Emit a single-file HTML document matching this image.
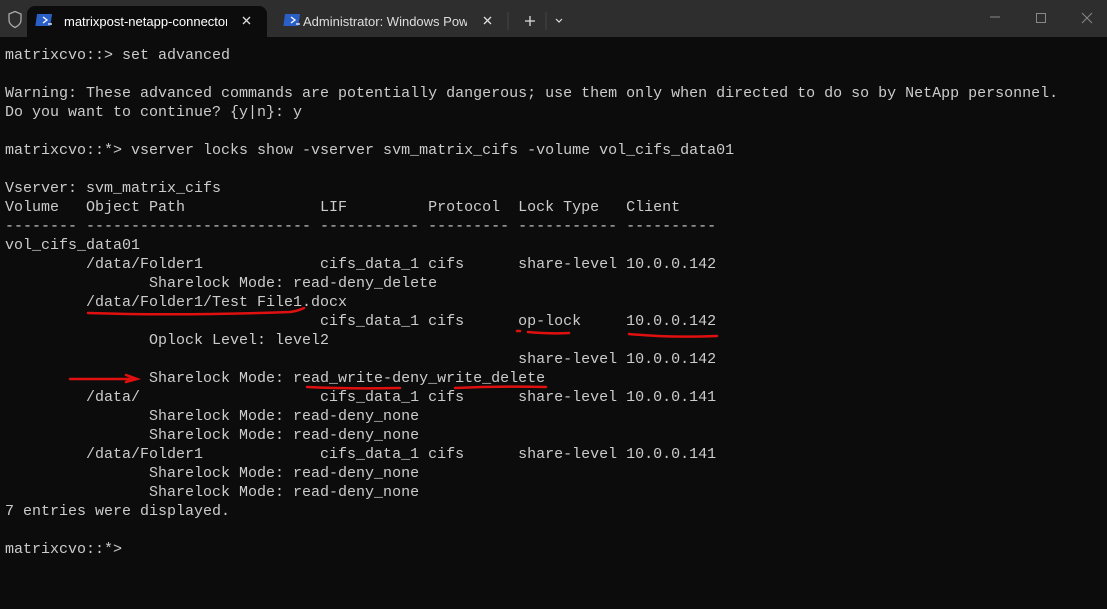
<!DOCTYPE html>
<html><head><meta charset="utf-8"><style>
body{margin:0;width:1107px;height:609px;background:#0c0c0c;overflow:hidden;position:relative;font-family:"Liberation Sans",sans-serif}
.bar{position:absolute;left:0;top:0;width:1107px;height:37px;background:#2e2e2e}
.tab{position:absolute;top:6px;height:31px;font-size:13px;color:#fff;line-height:31px;white-space:nowrap;overflow:hidden}
.t1{left:27px;width:240px;background:#0c0c0c;border-radius:8px 8px 0 0}
pre{position:absolute;left:5px;top:46px;margin:0;font-family:"Liberation Mono",monospace;font-size:15px;line-height:19px;color:#cccccc}
svg{position:absolute;left:0;top:0}
</style></head><body>
<div class="bar"></div>
<div class="tab t1"></div>
<div class="tab" style="left:64px;width:163px">matrixpost-netapp-connector</div>
<div class="tab" style="left:303px;width:164px;color:#ddd">Administrator: Windows PowerShell</div>
<svg width="1107" height="609">
<path d="M9 14 L15 11.5 L21 14 V20 C21 24 18 26 15 27.5 C12 26 9 24 9 20 Z" fill="none" stroke="#aaa" stroke-width="1.3"/>
<rect x="39" y="14" width="15" height="12" fill="#2a5fc8" transform="skewX(-8)"/>
<path d="M43 17 l4 3 -4 3 M48 24 h4" stroke="#fff" stroke-width="1.3" fill="none"/>
<path d="M243 17 l7 7 M250 17 l-7 7" stroke="#ddd" stroke-width="1.3"/>
<rect x="287" y="14" width="15" height="12" fill="#2a5fc8" transform="skewX(-8)"/>
<path d="M291 17 l4 3 -4 3 M296 24 h4" stroke="#fff" stroke-width="1.3" fill="none"/>
<path d="M484 17 l7 7 M491 17 l-7 7" stroke="#ddd" stroke-width="1.3"/>
<line x1="508" y1="12" x2="508" y2="30" stroke="#444"/>
<path d="M530 16 v10 M525 21 h10" stroke="#ddd" stroke-width="1.3"/>
<line x1="546" y1="12" x2="546" y2="30" stroke="#444"/>
<path d="M556 19 l3 3 3 -3" stroke="#ddd" stroke-width="1.2" fill="none"/>
<path d="M990 17 h10" stroke="#888" stroke-width="1"/>
<rect x="1036.5" y="13.5" width="9" height="9" fill="none" stroke="#888"/>
<path d="M1082 13 l10 10 M1092 13 l-10 10" stroke="#888" stroke-width="1"/>
<g stroke="#e01010" stroke-width="2.5" fill="none" stroke-linecap="round">
<path d="M88 313 Q180 316 290 312 Q298 311 304 308"/>
<path d="M517 331 h3"/><path d="M528 332 Q550 334 569 333"/>
<path d="M629 334 Q670 338 717 336"/>
<path d="M70 379 H136 M126 375 l11 4 -11 3"/>
<path d="M307 387 Q350 389 400 388"/><path d="M455 388 Q500 386 546 387"/>
</g>
</svg>
<pre>matrixcvo::&gt; set advanced

Warning: These advanced commands are potentially dangerous; use them only when directed to do so by NetApp personnel.
Do you want to continue? {y|n}: y

matrixcvo::*&gt; vserver locks show -vserver svm_matrix_cifs -volume vol_cifs_data01

Vserver: svm_matrix_cifs
Volume   Object Path               LIF         Protocol  Lock Type   Client
-------- ------------------------- ----------- --------- ----------- ----------
vol_cifs_data01
         /data/Folder1             cifs_data_1 cifs      share-level 10.0.0.142
                Sharelock Mode: read-deny_delete
         /data/Folder1/Test File1.docx
                                   cifs_data_1 cifs      op-lock     10.0.0.142
                Oplock Level: level2
                                                         share-level 10.0.0.142
                Sharelock Mode: read_write-deny_write_delete
         /data/                    cifs_data_1 cifs      share-level 10.0.0.141
                Sharelock Mode: read-deny_none
                Sharelock Mode: read-deny_none
         /data/Folder1             cifs_data_1 cifs      share-level 10.0.0.141
                Sharelock Mode: read-deny_none
                Sharelock Mode: read-deny_none
7 entries were displayed.

matrixcvo::*&gt;</pre>
</body></html>
